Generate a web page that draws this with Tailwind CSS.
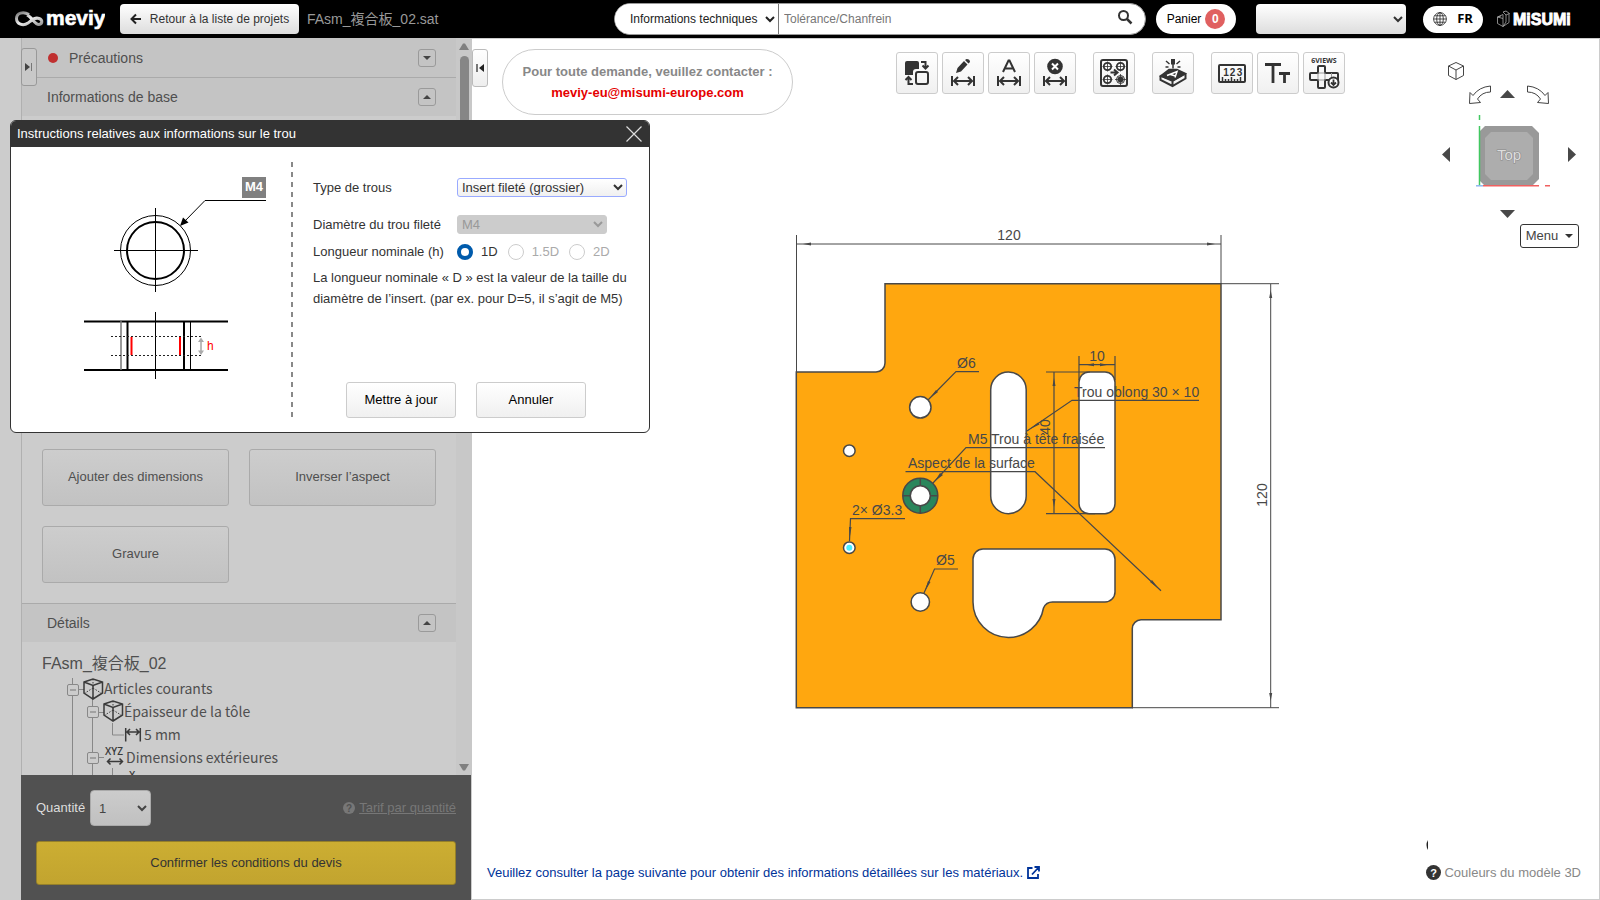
<!DOCTYPE html>
<html lang="fr">
<head>
    <meta charset="UTF-8">
    <meta name="viewport" content="width=device-width, initial-scale=1.0">
    <title>FAsm_複合板_02.sat | meviy</title>
    <script src="https://cdn.jsdelivr.net/npm/@tailwindcss/browser@4"></script>
</head>
<body class="h-screen flex flex-col overflow-hidden bg-white text-[13px] text-[#333] font-['Liberation_Sans','Noto_Sans_CJK_JP',sans-serif]">
    <!-- Header -->
    <header class="h-[38px] shrink-0 bg-black flex items-center pl-[15px] pr-[29px]">
        <a href="#" class="flex items-center w-[90px]" aria-label="meviy">
            <svg class="w-[90px] h-[30px]" viewBox="0 0 90 30">
                <defs>
                    <linearGradient id="metal" x1="0" y1="0" x2="1" y2="1">
                        <stop offset="0" stop-color="#777"/>
                        <stop offset="0.5" stop-color="#eee"/>
                        <stop offset="1" stop-color="#999"/>
                    </linearGradient>
                </defs>
                <path d="M14 10.500C8 7 1.500 9 1.500 14.500C1.500 20 8 22.500 13 19C17 16 20 13 24 14.500C28 16 27.500 20 24 20.500C20 21 17 13 12 11" fill="none" stroke="url(#metal)" stroke-width="3"/>
                <text x="31" y="21" font-size="21" font-weight="700" fill="#fff" stroke="#fff" stroke-width="0.600">meviy</text>
            </svg>
        </a>
        <button type="button" class="ml-[15px] h-[30px] w-[179px] flex items-center justify-center gap-2 rounded-sm bg-linear-to-b from-white to-[#ddd] text-xs text-[#333] whitespace-nowrap">
            <svg class="w-3 h-3" viewBox="0 0 12 12" fill="none" stroke="#222" stroke-width="2"><path d="M11 6H2M6 1.500L1.500 6L6 10.500"/></svg>
            Retour à la liste de projets
        </button>
        <span class="ml-2 text-sm text-[#999] whitespace-nowrap">FAsm_複合板_02.sat</span>

        <form class="ml-auto w-[532px] h-8 flex items-center bg-white border border-[#999] rounded-full overflow-hidden">
            <select aria-label="Catégorie" class="h-full w-[164px] pl-[11px] pr-[2px] border-r border-[#777] text-xs text-[#222] bg-white">
                <option>Informations techniques</option>
            </select>
            <input type="text" aria-label="Recherche" placeholder="Tolérance/Chanfrein" class="flex-1 h-full px-[5px] text-xs placeholder:text-[#777]">
            <button type="submit" aria-label="Rechercher" class="mr-3 mb-1">
                <svg class="w-4 h-4" viewBox="0 0 16 16" fill="none" stroke="#333"><circle cx="6.500" cy="6.500" r="4.500" stroke-width="2"/><path d="M10 10L14.500 14.500" stroke-width="2.500"/></svg>
            </button>
        </form>
        <a href="#" class="ml-[10px] w-20 h-[30px] flex items-center justify-center gap-1 rounded-full bg-white text-xs text-black">
            Panier
            <span class="w-5 h-5 rounded-full bg-[#e06060] text-white text-xs font-bold text-center leading-5">0</span>
        </a>
        <select aria-label="Compte" class="ml-5 w-[150px] h-[30px] pr-1 rounded-sm bg-linear-to-b from-white to-[#ddd] text-xs">
            <option></option>
        </select>
        <button type="button" class="ml-[17px] w-[60px] h-[27px] flex items-center justify-center gap-[10px] rounded-full bg-white text-[13px] font-bold text-black font-['Open_Sans',sans-serif]">
            <svg class="w-[14px] h-[14px]" viewBox="0 0 14 14" fill="none" stroke="#222" stroke-width="0.800"><circle cx="7" cy="7" r="6.400"/><ellipse cx="7" cy="7" rx="3.300" ry="6.400"/><path d="M7 0.600V13.400M0.600 7H13.400M1.500 3.800H12.500M1.500 10.200H12.500"/></svg>
            FR
        </button>
        <a href="#" class="ml-[14px]" aria-label="MiSUMi">
            <svg class="w-[74px] h-5" viewBox="0 0 74 20">
                <path d="M0.500 8L6 5.500L6 9.500L0.500 8V14.500L6 17.500V9.500M6 3L9 2L12.500 4.500L9 6ZM9 6V13L6 17.500L12 13.500V4.500M0.500 8L4 7" fill="none" stroke="#aaa" stroke-width="0.800"/>
                <text x="16" y="16" font-size="16" font-weight="700" fill="#fff" stroke="#fff" stroke-width="0.900">MiSUMi</text>
            </svg>
        </a>
    </header>

    <div class="flex-1 min-h-0 flex">
        <!-- Side panel -->
        <aside class="relative w-[472px] shrink-0 flex flex-col bg-[#ccc] pl-[21px] text-[#4f4f4f]">
            <div class="flex-1 min-h-0 flex">
                <div class="flex-1 overflow-hidden border-l border-[#b0b0b0]">
                    <div class="h-10 flex items-center bg-[#c4c4c4] border-b border-[#aaa] pl-[26px] pr-5 text-sm">
                        <span class="w-[10px] h-[10px] rounded-full bg-[#c03030] mr-[11px]"></span>
                        Précautions
                        <button type="button" aria-label="Ouvrir" class="ml-auto w-[18px] h-[18px] flex items-center justify-center border border-[#9a9a9a] rounded-[3px]">
                            <svg class="w-2 h-1" viewBox="0 0 8 4"><path d="M0 0H8L4 4Z" fill="#444"/></svg>
                        </button>
                    </div>
                    <div class="h-[38px] flex items-center bg-[#c4c4c4] pl-[25px] pr-5 text-sm">
                        Informations de base
                        <button type="button" aria-label="Fermer" class="ml-auto w-[18px] h-[18px] flex items-center justify-center border border-[#9a9a9a] rounded-[3px]">
                            <svg class="w-2 h-1" viewBox="0 0 8 4"><path d="M0 4H8L4 0Z" fill="#444"/></svg>
                        </button>
                    </div>
                    <div class="h-[487px] grid grid-cols-2 gap-5 content-end px-5 pb-5">
                        <button type="button" class="h-[57px] pb-[2px] border border-[#aaa] rounded-[3px] bg-linear-to-b from-[#cdcdcd] to-[#c2c2c2]">Ajouter des dimensions</button>
                        <button type="button" class="h-[57px] pb-[2px] border border-[#aaa] rounded-[3px] bg-linear-to-b from-[#cdcdcd] to-[#c2c2c2]">Inverser l’aspect</button>
                        <button type="button" class="h-[57px] pb-[2px] border border-[#aaa] rounded-[3px] bg-linear-to-b from-[#cdcdcd] to-[#c2c2c2]">Gravure</button>
                    </div>
                    <div class="h-[39px] flex items-center bg-[#c4c4c4] border-t border-[#aaa] pl-[25px] pr-5 text-sm">
                        Détails
                        <button type="button" aria-label="Fermer" class="ml-auto w-[18px] h-[18px] flex items-center justify-center border border-[#9a9a9a] rounded-[3px]">
                            <svg class="w-2 h-1" viewBox="0 0 8 4"><path d="M0 4H8L4 0Z" fill="#444"/></svg>
                        </button>
                    </div>
                    <!-- Feature tree -->
                    <div class="pl-5 pt-[9px]">
                        <p class="text-base leading-[26px]">FAsm_複合板_02</p>
                        <div class="flex">
                            <svg class="w-[92px] h-[110px] shrink-0 overflow-visible" viewBox="42 677 92 110" fill="none">
                                <path d="M72.500 678V790M92.500 696V790M112.500 723V735H124M79 689.500H84M99 712.500H104M99 757.500H104M112.500 768V790" stroke="#888"/>
                                <g fill="#ccc" stroke="#888"><rect x="67.500" y="684.500" width="11" height="11" rx="1.500"/><rect x="87.500" y="706.500" width="11" height="11" rx="1.500"/><rect x="87.500" y="752.500" width="11" height="11" rx="1.500"/></g>
                                <path d="M70 690H76M90 712H96M90 758H96" stroke="#777"/>
                                <g id="part" stroke="#3a3a3a">
                                    <path d="M84 682L93 679L102.500 682V693L93 699L84 693ZM84 682L93 685.500L102.500 682M93 685.500V699" stroke-width="1.500"/>
                                    <path d="M93 679V688L85 693M93 688L101 693" stroke-dasharray="1.500 1.500"/>
                                </g>
                                <use href="#part" x="20" y="22"/>
                                <path d="M125.700 728V741.500M140.300 728V741.500M127 732H139M130 729L127 732L130 735M136 729L139 732L136 735" stroke="#3a3a3a" stroke-width="1.500"/>
                                <text x="105" y="755" font-size="10" font-weight="600" fill="#3a3a3a" font-family="Open Sans, sans-serif">XYZ</text>
                                <path d="M108 761.500H122M110.500 758.500L107.500 761.500L110.500 764.500M119.500 758.500L122.500 761.500L119.500 764.500" stroke="#3a3a3a" stroke-width="1.500"/>
                                <text x="129" y="779" font-size="10" font-weight="600" fill="#3a3a3a" font-family="Open Sans, sans-serif">X</text>
                            </svg>
                            <ul class="-ml-[30px] text-sm leading-[23px] whitespace-nowrap font-['Noto_Sans_CJK_JP',sans-serif]">
                                <li>Articles courants</li>
                                <li class="pl-5">Épaisseur de la tôle</li>
                                <li class="pl-10">5 mm</li>
                                <li class="pl-[22px]">Dimensions extérieures</li>
                                <li class="pl-[50px]">120 mm</li>
                            </ul>
                        </div>
                    </div>
                </div>
                <!-- Scroll bar -->
                <div class="w-4 flex flex-col items-center justify-between bg-[#c8c8c8] pt-[5px] pb-1">
                    <div class="flex flex-col items-center gap-[6px]">
                        <svg class="w-[10px] h-[7px]" viewBox="0 0 10 7"><path d="M0 7L4 0.500H6L10 7Z" fill="#808080"/></svg>
                        <span class="w-[9px] h-[300px] rounded-full bg-[#868686]"></span>
                    </div>
                    <svg class="w-[10px] h-[7px]" viewBox="0 0 10 7"><path d="M0 0L4 6.500H6L10 0Z" fill="#808080"/></svg>
                </div>
            </div>
            <!-- Order bar -->
            <div class="h-[125px] shrink-0 mr-px bg-[#515151] px-[15px] pt-[15px]">
                <div class="flex items-center">
                    <label for="quantity" class="w-[54px] text-[#ddd]">Quantité</label>
                    <select id="quantity" class="w-[61px] h-9 pl-1 pr-2 border border-[#aaa] rounded-sm bg-linear-to-b from-[#ccc] to-[#c0c0c0] text-[#444]">
                        <option>1</option>
                    </select>
                    <svg class="ml-auto w-3 h-3" viewBox="0 0 12 12"><circle cx="6" cy="6" r="6" fill="#777"/><text x="6" y="9.500" text-anchor="middle" font-size="10" font-weight="700" fill="#515151">?</text></svg>
                    <a href="#" class="ml-1 text-[#777] underline">Tarif par quantité</a>
                </div>
                <button type="button" class="mt-[15px] w-full h-11 rounded-[3px] border border-[#95802a] bg-linear-to-b from-[#ccae32] to-[#c2a42f] text-[#333]">Confirmer les conditions du devis</button>
            </div>
            <button type="button" aria-label="Agrandir le panneau" class="absolute left-[21px] top-[10px] w-4 h-[38px] flex items-center justify-center bg-[#c8c8c8] border border-[#999] rounded-[3px]">
                <svg class="w-2 h-2" viewBox="0 0 8 8"><path d="M0 0L5 4L0 8Z" fill="#444"/><path d="M6.500 0V8" stroke="#777"/></svg>
            </button>
        </aside>

        <!-- Model view -->
        <main class="relative flex-1 min-w-0 flex flex-col border-t border-r border-b border-[#ccc]">
            <svg class="absolute inset-0 w-full h-full" viewBox="472 39 1127 860" fill="none" stroke="#484848" font-size="14">
                <path d="M885 283.700H1221V619.700H1141A9 9 0 0 0 1132.300 628.500V707.700H796.300V372H876A9 9 0 0 0 885 363Z" fill="#ffa70f" stroke-width="1.500"/>
                <g fill="#fff" stroke-width="1.500">
                    <circle cx="920.300" cy="407.300" r="10.700"/>
                    <circle cx="849.300" cy="450.700" r="5.800"/>
                    <circle cx="849.300" cy="547.700" r="5.800"/>
                    <circle cx="920.300" cy="602" r="9.200"/>
                    <circle cx="920.300" cy="495.700" r="17.500" fill="#2a865c"/>
                    <path d="M920.300 478V513M903 495.700H938"/>
                    <circle cx="920.300" cy="495.700" r="10"/>
                    <rect x="990.700" y="372" width="35.500" height="141.700" rx="17.700"/>
                    <rect x="1079" y="372" width="36" height="141.700" rx="10"/>
                    <path d="M973 602V559A10 10 0 0 1 983 549H1105A10 10 0 0 1 1115 559V592A10 10 0 0 1 1105 602H1053A10 10 0 0 0 1043.500 608A35.600 35.600 0 0 1 1008.300 637.500A35.400 35.400 0 0 1 973 602Z"/>
                </g>
                <circle cx="849.300" cy="547.700" r="3" fill="#4df0ff" stroke="none"/>
                <!-- Dimension lines and leaders -->
                <path d="M796.500 235V372M1221 235V284M796 244H1221M1221 283.700H1279M1132 707.700H1279M1270.700 284V707.700"/>
                <path d="M1046 372H1090M1046 513.700H1095M1054 372V513.700M1079 356V380M1115 356V380M1079 364.700H1115" stroke-width="1.200"/>
                <path d="M928 400L956 371.700H979M1027 431L1072 400.300H1199M933 483L966 447.700H1105M905.500 471.700H1035L1161 590.700M849.500 541L850.500 518.700H905M924 593L934.500 569H958" stroke-width="1.200"/>
                <g fill="#484848" stroke="none">
                    <path d="M803 244L811 242.500V245.500ZM1215 244L1207 242.500V245.500ZM1270.700 290L1269.200 298H1272.200ZM1270.700 701L1269.200 693H1272.200ZM1054 378L1052.500 386H1055.500ZM1054 507L1052.500 499H1055.500ZM1086 364.700L1094 363.200V366.200ZM1108 364.700L1100 363.200V366.200Z"/>
                    <path d="M930 398L936 390L938 392ZM1030 429L1038 422.500L1039.500 424.500ZM935 481L940 473L943 475ZM1159 589L1150 582L1152 580ZM849.500 539L849 527H851.500ZM925 591L928 581L930.500 582Z"/>
                    <text x="1009" y="240" text-anchor="middle">120</text>
                    <text x="1097" y="361" text-anchor="middle">10</text>
                    <text transform="translate(1267 495) rotate(-90)" text-anchor="middle">120</text>
                    <text transform="translate(1050 427) rotate(-90)" text-anchor="middle">40</text>
                    <text x="957" y="368">Ø6</text>
                    <text x="1074" y="397">Trou oblong 30 × 10</text>
                    <text x="968" y="444">M5 Trou à tête fraisée</text>
                    <text x="908" y="468">Aspect de la surface</text>
                    <text x="852" y="515">2× Ø3.3</text>
                    <text x="936" y="565">Ø5</text>
                </g>
            </svg>

            <div class="relative flex items-start pt-[10px]">
                <button type="button" aria-label="Réduire le panneau" class="w-4 h-[38px] flex items-center justify-center bg-linear-to-b from-white to-[#eee] border border-[#bbb] rounded-[3px]">
                    <svg class="w-2 h-2" viewBox="0 0 8 8"><path d="M8 0L3 4L8 8Z" fill="#222"/><path d="M1 0V8" stroke="#222" stroke-width="1.200"/></svg>
                </button>
                <div class="ml-[14px] w-[291px] h-[66px] border border-[#ccc] rounded-full bg-white text-center font-bold leading-[21px] pt-[11px]">
                    <p class="text-[#888]">Pour toute demande, veuillez contacter :</p>
                    <p><a href="#" class="text-[#e50000]">meviy-eu@misumi-europe.com</a></p>
                </div>

                <!-- Toolbar -->
                <div class="ml-auto mt-[3px] mr-[94px] flex gap-[17px]">
                    <div class="flex gap-1">
                        <button type="button" aria-label="Inverser" class="w-[42px] h-[42px] flex items-center justify-center border border-[#ccc] rounded-[3px] bg-linear-to-b from-white to-[#f0f0f0]">
                            <svg class="w-[30px] h-[30px]" viewBox="0 0 30 30" fill="none" stroke="#333" stroke-width="2"><path d="M5 3H15Q17 3 17 5V11H14Q11 11 11 14V17H3V5Q3 3 5 3Z" fill="#333" stroke="none"/><rect x="14" y="14" width="12" height="12" rx="2"/><path d="M19 4H23.500V10M20.500 7.500L23.500 10.500L26.500 7.500M11 26H6.500V20M3.500 22L6.500 19L9.500 22"/></svg>
                        </button>
                        <button type="button" aria-label="Modifier la cote" class="w-[42px] h-[42px] flex items-center justify-center border border-[#ccc] rounded-[3px] bg-linear-to-b from-white to-[#f0f0f0]">
                            <svg class="w-[30px] h-[30px]" viewBox="0 0 30 30" fill="none" stroke="#333" stroke-width="2"><g id="cote"><path d="M4 18V28M26 18V28M6 23H24M10 19L6 23L10 27M20 19L24 23L20 27"/></g><path d="M8 15L9.500 10L16 3L19.500 6.500L13 13.500ZM17 2L18.500 1Q22 1 22 4L20.500 5.500Z" fill="#333" stroke="none"/></svg>
                        </button>
                        <button type="button" aria-label="Annoter la cote" class="w-[42px] h-[42px] flex items-center justify-center border border-[#ccc] rounded-[3px] bg-linear-to-b from-white to-[#f0f0f0]">
                            <svg class="w-[30px] h-[30px]" viewBox="0 0 30 30" fill="none" stroke="#333" stroke-width="2"><use href="#cote"/><path d="M9 14L14.500 2.500H15.500L21 14M11 10.500H19"/></svg>
                        </button>
                        <button type="button" aria-label="Supprimer la cote" class="w-[42px] h-[42px] flex items-center justify-center border border-[#ccc] rounded-[3px] bg-linear-to-b from-white to-[#f0f0f0]">
                            <svg class="w-[30px] h-[30px]" viewBox="0 0 30 30" fill="none" stroke="#333" stroke-width="2"><use href="#cote"/><circle cx="15" cy="8.500" r="7.800" fill="#333" stroke="none"/><path d="M12 5.500L18 11.500M18 5.500L12 11.500" stroke="#fff"/></svg>
                        </button>
                    </div>
                    <button type="button" aria-label="Trous" class="w-[42px] h-[42px] flex items-center justify-center border border-[#ccc] rounded-[3px] bg-linear-to-b from-white to-[#f0f0f0]">
                        <svg class="w-[30px] h-[30px]" viewBox="0 0 30 30" fill="none" stroke="#333" stroke-width="1.800"><rect x="2" y="2" width="26" height="26" rx="2" stroke-width="2"/><circle cx="8.500" cy="8.500" r="3.700"/><circle cx="21.500" cy="8.500" r="3.700"/><circle cx="8.500" cy="21.500" r="3.700"/><circle cx="21.500" cy="21.500" r="4" stroke-width="1"/><circle cx="21.500" cy="21.500" r="2" fill="#333"/><path d="M8.500 3.500V13.500M3.500 8.500H13.500M21.500 3.500V13.500M16.500 8.500H26.500M8.500 16.500V26.500M3.500 21.500H13.500M21.500 16V27M16 21.500H27" stroke-width="0.800"/><path d="M11.500 14.500H18M15 11.500L18.500 14.500L15 17.500" stroke-width="2"/></svg>
                    </button>
                    <button type="button" aria-label="Gravure laser" class="w-[42px] h-[42px] flex items-center justify-center border border-[#ccc] rounded-[3px] bg-linear-to-b from-white to-[#f0f0f0]">
                        <svg class="w-[30px] h-[30px]" viewBox="0 0 30 30" fill="none" stroke="#333" stroke-width="1.500"><path d="M2.500 18L11 11.500H19L27.500 15.500L15 22.500Z" fill="#333"/><path d="M2.500 17.500V22L14.500 28L27.500 20.500V15.500M2.500 17.500L14.500 23L27.500 15.500M14.500 23V28" stroke-width="2"/><path d="M9 17.500L19 13.500L17 19.500M12.500 16.500L17.500 18" stroke="#fff"/><path d="M15 1V6.500" stroke-width="4"/><path d="M15 6V10.500M8 3L11.500 6M7.500 9H10.500M22 3L18.500 6M22.500 9H19.500"/></svg>
                    </button>
                    <div class="flex gap-1">
                        <button type="button" aria-label="Mesures" class="w-[42px] h-[42px] flex items-center justify-center border border-[#ccc] rounded-[3px] bg-linear-to-b from-white to-[#f0f0f0]">
                            <svg class="w-[30px] h-[30px]" viewBox="0 0 30 30" fill="none" stroke="#333"><rect x="2" y="7" width="26" height="17" rx="1" stroke-width="2"/><path d="M5.500 24V19M8.500 24V21M11.500 24V21M14.500 24V19M17.500 24V21M20.500 24V21M23.500 24V19" stroke-width="1.500"/><g font-size="10" font-weight="700" text-anchor="middle" fill="#333" stroke="none"><text x="9" y="18">1</text><text x="15.500" y="18">2</text><text x="22.500" y="18">3</text></g></svg>
                        </button>
                        <button type="button" aria-label="Taille du texte" class="w-[42px] h-[42px] flex items-center justify-center border border-[#ccc] rounded-[3px] bg-linear-to-b from-white to-[#f0f0f0]">
                            <svg class="w-[30px] h-[30px]" viewBox="0 0 30 30" fill="none" stroke="#333" stroke-width="2.800"><path d="M2 6.500H18M10 6.500V25M16 15.500H27M21.500 15.500V25"/></svg>
                        </button>
                        <button type="button" aria-label="6 vues" class="w-[42px] h-[42px] flex items-center justify-center border border-[#ccc] rounded-[3px] bg-linear-to-b from-white to-[#f0f0f0]">
                            <svg class="w-[34px] h-[38px]" viewBox="0 0 34 38" fill="none" stroke="#333" stroke-width="2"><text x="17" y="9" text-anchor="middle" font-size="7" font-weight="700" font-family="Open Sans, sans-serif" fill="#333" stroke="none">6VIEWS</text><path d="M11 19V13Q11 12 12 12H17Q18 12 18 13V19H30Q31 19 31 20V26H18V33Q18 34 17 34H12Q11 34 11 33V26H4Q3 26 3 25V20Q3 19 4 19Z"/><path d="M11 19H18V26H11ZM24.500 19V26" stroke="#999" stroke-width="1"/><circle cx="26.500" cy="28.500" r="5" fill="#fff"/><path d="M26.500 25.500V31M24 28.500L26.500 31L29 28.500" stroke-width="1.800"/></svg>
                        </button>
                    </div>
                </div>

                <!-- View cube -->
                <div class="w-[160px] flex flex-col items-end pr-5">
                    <svg class="w-[140px] h-[170px]" viewBox="1439 49 140 170" fill="none" stroke="#444">
                        <path d="M1456 62.500L1463.500 66V75.500L1456 79.500L1448.500 75.500V66ZM1448.500 66L1456 70L1463.500 66M1456 70V79.500"/>
                        <path d="M1490.500 86V92Q1482 92 1477.500 99L1480.500 102.500L1469.500 103.500L1470 92.500L1473 95.500Q1479 87 1490.500 86ZM1527.500 86V92Q1536 92 1540.500 99L1537.500 102.500L1548.500 103.500L1548 92.500L1545 95.500Q1539 87 1527.500 86Z"/>
                        <path d="M1500 98L1507.500 90L1515 98ZM1500 210H1515L1507.500 218ZM1450 147V162L1442 154.500ZM1568 147V162L1576 154.500Z" fill="#484848" stroke="none"/>
                        <path d="M1485 126H1532L1539 133V179L1532 186H1485L1479 180V132Z" fill="#999" stroke="none"/>
                        <path d="M1491 132H1527L1533 138V174L1527 180H1491L1485 174V138Z" fill="#adadad" stroke="none"/>
                        <path d="M1479.500 115V120M1479.500 126V186" stroke="#40c860" stroke-width="1.500"/>
                        <path d="M1483 185.800H1539M1545 185.800H1550" stroke="#f06060" stroke-width="1.500"/>
                        <path d="M1476 185.800H1483" stroke="#90b8f0" stroke-width="1.500"/>
                        <text x="1509" y="160" text-anchor="middle" font-size="15" fill="#ddd" stroke="#888" stroke-width="1" paint-order="stroke">Top</text>
                    </svg>
                    <button type="button" class="mt-[5px] h-6 w-[59px] flex items-center justify-center gap-[7px] border border-[#333] rounded-[3px] bg-white text-[13px] text-[#444]">
                        Menu
                        <svg class="w-2 h-1" viewBox="0 0 8 4"><path d="M0 0H8L4 4Z" fill="#333"/></svg>
                    </button>
                </div>
            </div>

            <div class="relative mt-auto flex items-end justify-between pl-[15px] pr-[18px] pb-[17px]">
                <a href="#" class="flex items-center gap-1 text-[#003399]">
                    Veuillez consulter la page suivante pour obtenir des informations détaillées sur les matériaux.
                    <svg class="w-[13px] h-[13px]" viewBox="0 0 13 13" fill="none" stroke="#003399" stroke-width="1.800"><path d="M5.500 2H1V12H11V8M5 8.500L11.500 1.500M7.500 1H12V5.500"/></svg>
                </a>
                <div class="flex flex-col gap-[13px]">
                    <svg class="w-[2px] h-[10px]" viewBox="0 0 2 10"><path d="M2 0Q-1 5 2 10Z" fill="#222"/></svg>
                    <a href="#" class="flex items-center gap-[3px] text-[#888]">
                        <svg class="w-[15px] h-[15px]" viewBox="0 0 15 15"><circle cx="7.500" cy="7.500" r="7.500" fill="#333"/><text x="7.500" y="11.500" text-anchor="middle" font-size="11" font-weight="700" fill="#fff">?</text></svg>
                        Couleurs du modèle 3D
                    </a>
                </div>
            </div>
        </main>
    </div>

    <!-- Hole information dialog -->
    <section role="dialog" aria-labelledby="dialog-title" class="absolute left-[10px] top-[120px] w-[640px] rounded-md border border-[#333] bg-white overflow-hidden">
        <div class="h-[26px] flex items-center justify-between bg-[#333] pl-[6px] pr-[7px]">
            <h2 id="dialog-title" class="text-white">Instructions relatives aux informations sur le trou</h2>
            <button type="button" aria-label="Fermer">
                <svg class="w-4 h-4" viewBox="0 0 16 16" stroke="#ddd" stroke-width="1.200"><path d="M0.500 0.500L15.500 15.500M15.500 0.500L0.500 15.500"/></svg>
            </button>
        </div>
        <div class="h-[285px] flex pt-[15px] pb-[14px]">
            <svg class="w-[280px] h-[256px] shrink-0" viewBox="11 162 280 256" fill="none" stroke="#000">
                <rect x="242" y="177" width="24" height="21" fill="#808080" stroke="none"/>
                <text x="254" y="191" text-anchor="middle" font-size="13" font-weight="700" fill="#fff" stroke="none">M4</text>
                <path d="M266 200.500H205L183 223M114 250.500H198M155.500 208V292"/>
                <path d="M180 226L183 217.500L188.500 222.500Z" fill="#000" stroke="none"/>
                <circle cx="155.500" cy="250.500" r="35"/>
                <circle cx="155.500" cy="250.500" r="28.500" stroke-width="2"/>
                <path d="M84 321.500H228M84 370H228M127.500 321V370M184 321V370" stroke-width="2"/>
                <path d="M121 321V370" stroke="#777" stroke-width="1.500"/>
                <path d="M190.500 321V370M155.500 312V379"/>
                <path d="M111 336.500H201M111 355.500H201" stroke="#222" stroke-dasharray="2 2"/>
                <path d="M131.500 337V355M180 337V355" stroke="#f00" stroke-width="2"/>
                <path d="M201 340V352" stroke="#bbb" stroke-width="2"/>
                <path d="M198 342L201 337.500L204 342ZM198 350.500L201 355L204 350.500Z" fill="#aaa" stroke="none"/>
                <text x="207" y="350" font-size="12" fill="#f00" stroke="none">h</text>
            </svg>
            <svg class="w-[2px] h-[256px] shrink-0" viewBox="0 0 2 256"><path d="M1 0V256" stroke="#888" stroke-width="2" stroke-dasharray="5 5"/></svg>
            <form class="flex-1 pl-5 flex flex-col">
                <div class="mt-4 h-[19px] flex items-center">
                    <label for="hole-type" class="w-36">Type de trous</label>
                    <select id="hole-type" class="w-[170px] h-[19px] border border-[#99aaff] rounded-[3px] bg-linear-to-b from-white to-[#f0f0f0]">
                        <option>Insert fileté (grossier)</option>
                    </select>
                </div>
                <div class="mt-[18px] h-[19px] flex items-center">
                    <label for="hole-diameter" class="w-36">Diamètre du trou fileté</label>
                    <select id="hole-diameter" disabled class="w-[150px] h-[19px] border border-[#ccc] rounded-[3px] bg-[#ccc] text-[#999]">
                        <option>M4</option>
                    </select>
                </div>
                <fieldset class="mt-2 h-4 flex items-center">
                    <span class="w-36">Longueur nominale (h)</span>
                    <input type="radio" name="length" id="len-1" checked class="appearance-none w-4 h-4 rounded-full border-4 border-[#005bac]">
                    <label for="len-1" class="ml-2 mr-[10px]">1D</label>
                    <input type="radio" name="length" id="len-15" disabled class="appearance-none w-4 h-4 rounded-full border border-[#ccc]">
                    <label for="len-15" class="ml-2 mr-[10px] text-[#aaa]">1.5D</label>
                    <input type="radio" name="length" id="len-2" disabled class="appearance-none w-4 h-4 rounded-full border border-[#ccc]">
                    <label for="len-2" class="ml-2 text-[#aaa]">2D</label>
                </fieldset>
                <p class="mt-[9px] leading-[21px] whitespace-nowrap">La longueur nominale « D » est la valeur de la taille du<br>diamètre de l’insert. (par ex. pour D=5, il s’agit de M5)</p>
                <div class="mt-auto flex gap-5 pl-[33px]">
                    <button type="button" class="w-[110px] h-9 border border-[#ccc] rounded-[3px] bg-linear-to-b from-white to-[#f0f0f0] text-black">Mettre à jour</button>
                    <button type="button" class="w-[110px] h-9 border border-[#ccc] rounded-[3px] bg-linear-to-b from-white to-[#f0f0f0] text-black">Annuler</button>
                </div>
            </form>
        </div>
    </section>
</body>
</html>
